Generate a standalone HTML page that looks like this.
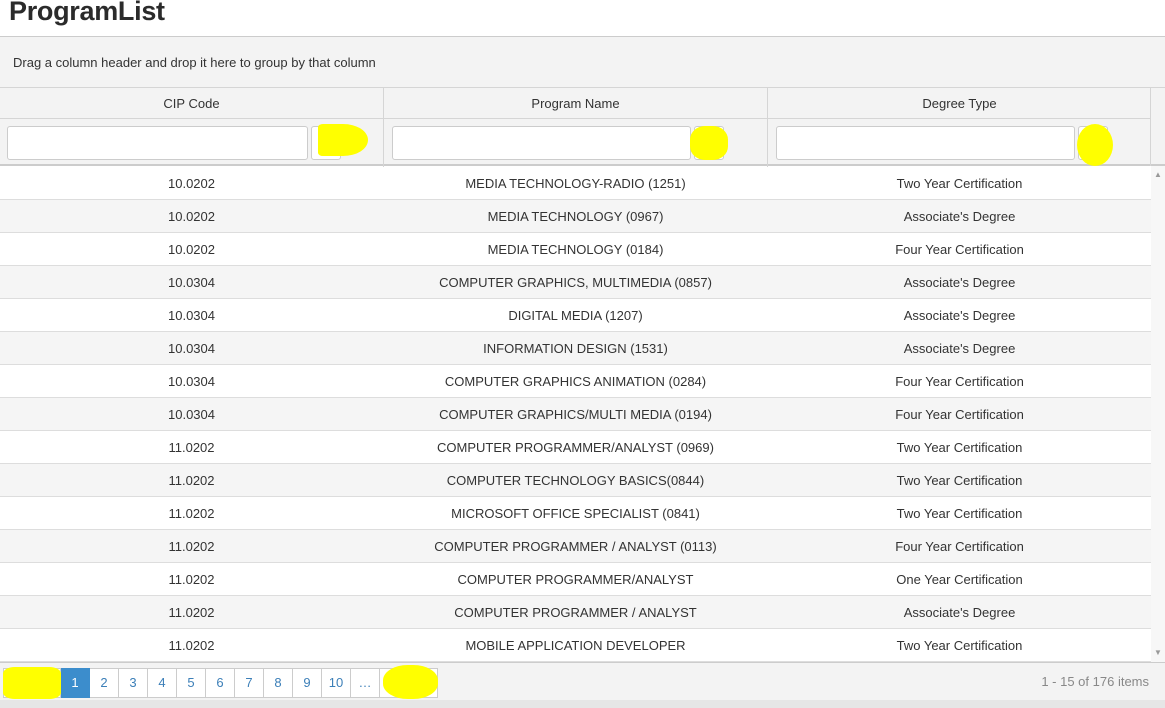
<!DOCTYPE html>
<html><head><style>
*{box-sizing:border-box;margin:0;padding:0}
body{width:1165px;height:708px;overflow:hidden;background:#fff;font-family:"Liberation Sans",sans-serif;color:#333;position:relative}
.a{position:absolute}
h1{position:absolute;left:9px;top:-4px;font-size:27px;font-weight:bold;color:#2b2b2b;letter-spacing:-0.3px}
.grp{left:0;top:36px;width:1165px;height:52px;background:#f3f3f3;border-top:1px solid #ccc;border-bottom:1px solid #d5d5d5}
.grp span{position:absolute;left:13px;top:18px;font-size:13px;color:#333}
.hd{top:88px;height:78px;left:0;width:1165px;background:#f3f3f3;border-bottom:2px solid #ccc}
.cell{position:absolute;text-align:center;font-size:13px}
.vl{position:absolute;width:1px;background:#d5d5d5}
.inp{position:absolute;height:34px;background:#fff;border:1px solid #ccc;border-radius:3px}
.row{position:absolute;left:0;width:1151px;height:33px;border-bottom:1px solid #ddd;font-size:13px}
.row div{position:absolute;top:9px;text-align:center}
.y{position:absolute;background:#ffff00;border-radius:40%}
.pg{top:662px;left:0;width:1165px;height:38px;background:#f3f3f3;border-top:1px solid #ccc}
.pb{position:absolute;top:5px;width:29px;height:30px;background:#fff;border:1px solid #ccc;border-left:none;text-align:center;line-height:28px;font-size:13px;color:#3c7fb8}
</style></head><body>
<h1>ProgramList</h1>
<div class="a grp"><span>Drag a column header and drop it here to group by that column</span></div>
<div class="a hd">
 <div class="cell" style="left:0;width:383px;top:8px">CIP Code</div>
 <div class="cell" style="left:384px;width:383px;top:8px">Program Name</div>
 <div class="cell" style="left:768px;width:383px;top:8px">Degree Type</div>
 <div class="a" style="left:0;top:30px;width:1151px;height:1px;background:#d5d5d5"></div>
 <div class="vl" style="left:383px;top:0;height:78px"></div>
 <div class="vl" style="left:767px;top:0;height:78px"></div>
 <div class="vl" style="left:1150px;top:0;height:78px"></div>
 <div class="inp" style="left:7px;top:38px;width:301px"></div>
 <div class="inp" style="left:311px;top:38px;width:30px"></div>
 <div class="inp" style="left:392px;top:38px;width:299px"></div>
 <div class="inp" style="left:694px;top:38px;width:30px"></div>
 <div class="inp" style="left:776px;top:38px;width:299px"></div>
 <div class="inp" style="left:1078px;top:38px;width:30px"></div>
 <div class="y" style="left:318px;top:36px;width:50px;height:32px;border-radius:10% 50% 50% 10%"></div>
 <div class="y" style="left:690px;top:38px;width:38px;height:34px"></div>
 <div class="y" style="left:1077px;top:36px;width:36px;height:42px;border-radius:50%"></div>
</div>
<div class="a" style="left:383px;top:166px;width:1px;height:496px;background:#d5d5d5"></div>
<div class="a" style="left:767px;top:166px;width:1px;height:496px;background:#d5d5d5"></div>
<div class="a" style="left:1151px;top:166px;width:14px;height:496px;background:#f7f7f7"></div>
<div class="a" style="left:1154px;top:170px;font-size:8px;color:#999">▲</div>
<div class="a" style="left:1154px;top:648px;font-size:8px;color:#999">▼</div>
<div id="rows"></div>
<script>
var d=[["10.0202","MEDIA TECHNOLOGY-RADIO (1251)","Two Year Certification"],["10.0202","MEDIA TECHNOLOGY (0967)","Associate's Degree"],["10.0202","MEDIA TECHNOLOGY (0184)","Four Year Certification"],["10.0304","COMPUTER GRAPHICS, MULTIMEDIA (0857)","Associate's Degree"],["10.0304","DIGITAL MEDIA (1207)","Associate's Degree"],["10.0304","INFORMATION DESIGN (1531)","Associate's Degree"],["10.0304","COMPUTER GRAPHICS ANIMATION (0284)","Four Year Certification"],["10.0304","COMPUTER GRAPHICS/MULTI MEDIA (0194)","Four Year Certification"],["11.0202","COMPUTER PROGRAMMER/ANALYST (0969)","Two Year Certification"],["11.0202","COMPUTER TECHNOLOGY BASICS(0844)","Two Year Certification"],["11.0202","MICROSOFT OFFICE SPECIALIST (0841)","Two Year Certification"],["11.0202","COMPUTER PROGRAMMER / ANALYST (0113)","Four Year Certification"],["11.0202","COMPUTER PROGRAMMER/ANALYST","One Year Certification"],["11.0202","COMPUTER PROGRAMMER / ANALYST","Associate's Degree"],["11.0202","MOBILE APPLICATION DEVELOPER","Two Year Certification"]];
var h="";d.forEach(function(r,i){h+='<div class="row" style="top:'+(167+i*33)+'px;background:'+(i%2?'#f5f5f5':'#fff')+'"><div style="left:0;width:383px">'+r[0]+'</div><div style="left:384px;width:383px">'+r[1]+'</div><div style="left:768px;width:383px">'+r[2]+'</div></div>';});
document.getElementById("rows").innerHTML=h;
</script>
<div class="a pg">
 <div class="pb" style="left:3px;border-left:1px solid #ccc"></div>
 <div class="pb" style="left:32px"></div>
 <div class="pb" style="left:61px;background:#3c8dcc;color:#fff;border-color:#3c8dcc">1</div>
 <div class="pb" style="left:90px">2</div><div class="pb" style="left:119px">3</div><div class="pb" style="left:148px">4</div><div class="pb" style="left:177px">5</div><div class="pb" style="left:206px">6</div><div class="pb" style="left:235px">7</div><div class="pb" style="left:264px">8</div><div class="pb" style="left:293px">9</div><div class="pb" style="left:322px">10</div><div class="pb" style="left:351px">…</div><div class="pb" style="left:380px"></div><div class="pb" style="left:409px"></div>
 <div class="y" style="left:3px;top:4px;width:58px;height:32px;border-radius:20%"></div>
 <div class="y" style="left:383px;top:2px;width:55px;height:34px;border-radius:45%"></div>
 <div class="a" style="right:16px;top:11px;font-size:13px;color:#888">1 - 15 of 176 items</div>
</div>
<div class="a" style="left:0;top:700px;width:1165px;height:8px;background:#e6e6e6"></div>
</body></html>
